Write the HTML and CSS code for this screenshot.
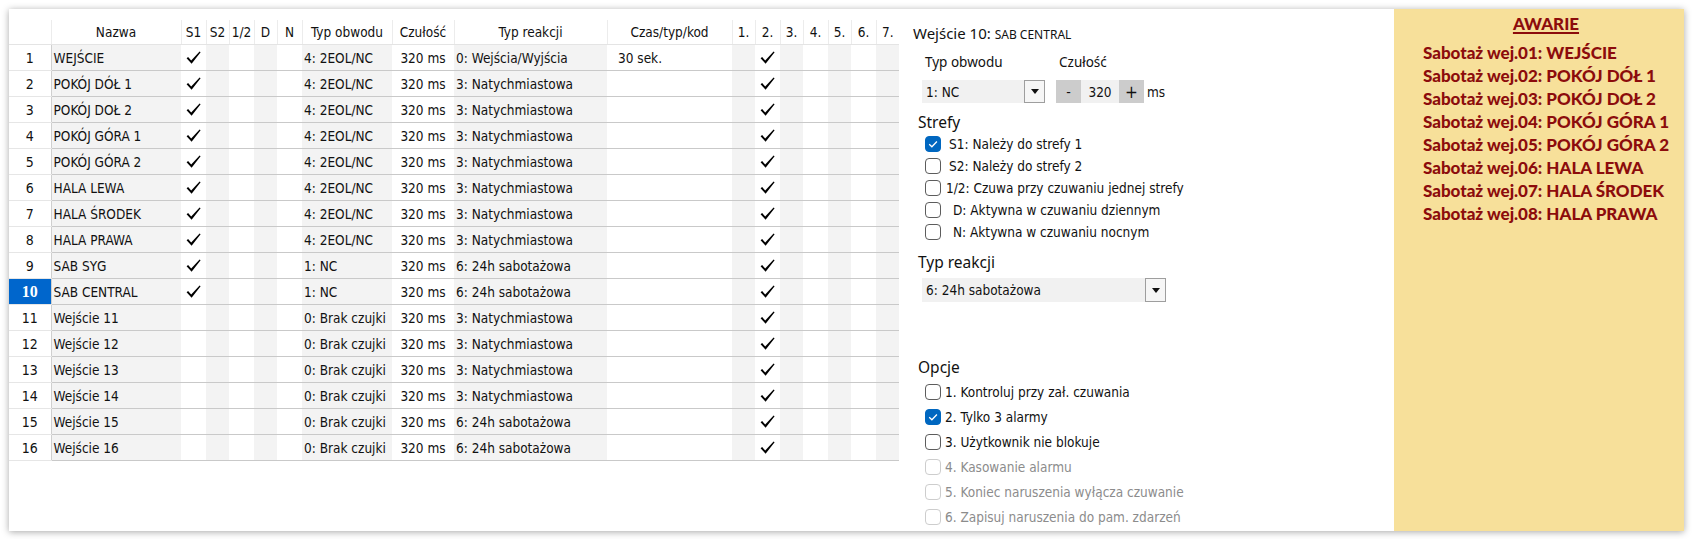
FILE: index.html
```html
<!DOCTYPE html>
<html lang="pl">
<head>
<meta charset="utf-8">
<title>Wejścia</title>
<link rel="stylesheet" href="styles.css">
</head>
<body>
<svg class="defs" width="0" height="0" aria-hidden="true">
  <defs>
    <symbol id="tick" viewBox="0 0 15 13">
      <path d="M0.6 7.2 L2.1 6.1 L5.2 9.4 L13.6 0.4 L14.6 1.3 L5.6 12.8 Z"/>
    </symbol>
  </defs>
</svg>
<div class="panel">
  <section class="grid-area">
    <table class="inputs">
      <colgroup>
        <col class="c-num">
        <col class="c-name g">
        <col class="c-s1">
        <col class="c-s2 g">
        <col class="c-half">
        <col class="c-d g">
        <col class="c-n">
        <col class="c-type g">
        <col class="c-sens">
        <col class="c-react g">
        <col class="c-time">
        <col class="c-o1 g">
        <col class="c-o2">
        <col class="c-o3 g">
        <col class="c-o4">
        <col class="c-o5 g">
        <col class="c-o6">
        <col class="c-o7 g">
      </colgroup>
      <thead>
        <tr>
          <th class="num"></th><th>Nazwa</th><th>S1</th><th>S2</th><th>1/2</th><th>D</th><th>N</th>
          <th>Typ obwodu</th><th>Czułość</th><th>Typ reakcji</th><th>Czas/typ/kod</th>
          <th>1.</th><th>2.</th><th>3.</th><th>4.</th><th>5.</th><th>6.</th><th class="last">7.</th>
        </tr>
      </thead>
      <tbody id="rows"></tbody>
    </table>
  </section>

  <section class="details">
    <h2 class="title">Wejście 10: <span class="title-name">SAB CENTRAL</span></h2>
    <div class="circuit">
      <div class="lbl">Typ obwodu</div>
      <div class="lbl">Czułość</div>
      <div class="combo narrow"><span class="combo-val">1: NC</span><span class="combo-btn"><i class="tri"></i></span></div>
      <div class="stepper">
        <span class="step-btn">-</span><span class="step-val">320</span><span class="step-btn plus">+</span><span class="unit">ms</span>
      </div>
    </div>

    <h3 class="group">Strefy</h3>
    <ul class="checks zones">
      <li><span class="cb on"><svg viewBox="0 0 10 10"><path d="M2.3 5.2 L4.2 7 L7.8 3.2"/></svg></span><span class="cl ind8">S1: Należy do strefy 1</span></li>
      <li><span class="cb"></span><span class="cl ind8">S2: Należy do strefy 2</span></li>
      <li><span class="cb"></span><span class="cl ind5">1/2: Czuwa przy czuwaniu jednej strefy</span></li>
      <li><span class="cb"></span><span class="cl ind12">D: Aktywna w czuwaniu dziennym</span></li>
      <li><span class="cb"></span><span class="cl ind12">N: Aktywna w czuwaniu nocnym</span></li>
    </ul>

    <h3 class="group">Typ reakcji</h3>
    <div class="combo wide"><span class="combo-val">6: 24h sabotażowa</span><span class="combo-btn"><i class="tri"></i></span></div>

    <h3 class="group options-head">Opcje</h3>
    <ul class="checks options">
      <li><span class="cb"></span><span class="cl">1. Kontroluj przy zał. czuwania</span></li>
      <li><span class="cb on"><svg viewBox="0 0 10 10"><path d="M2.3 5.2 L4.2 7 L7.8 3.2"/></svg></span><span class="cl">2. Tylko 3 alarmy</span></li>
      <li><span class="cb"></span><span class="cl">3. Użytkownik nie blokuje</span></li>
      <li class="dis"><span class="cb"></span><span class="cl">4. Kasowanie alarmu</span></li>
      <li class="dis"><span class="cb"></span><span class="cl">5. Koniec naruszenia wyłącza czuwanie</span></li>
      <li class="dis"><span class="cb"></span><span class="cl">6. Zapisuj naruszenia do pam. zdarzeń</span></li>
    </ul>
  </section>

  <aside class="faults">
    <div class="faults-box">
      <div class="faults-title">AWARIE</div>
      <ul class="faults-list">
        <li>Sabotaż wej.01: WEJŚCIE</li>
        <li>Sabotaż wej.02: POKÓJ DÓŁ 1</li>
        <li>Sabotaż wej.03: POKÓJ DOŁ 2</li>
        <li>Sabotaż wej.04: POKÓJ GÓRA 1</li>
        <li>Sabotaż wej.05: POKÓJ GÓRA 2</li>
        <li>Sabotaż wej.06: HALA LEWA</li>
        <li>Sabotaż wej.07: HALA ŚRODEK</li>
        <li>Sabotaż wej.08: HALA PRAWA</li>
      </ul>
    </div>
  </aside>
</div>
<script src="app.js"></script>
</body>
</html>
```

FILE: app.js
```js
// Input list: name, zone S1 flag, circuit type, reaction type, delay text
var inputs = [
  ["WEJŚCIE", true, "4: 2EOL/NC", "0: Wejścia/Wyjścia", "30 sek."],
  ["POKÓJ DÓŁ 1", true, "4: 2EOL/NC", "3: Natychmiastowa", ""],
  ["POKÓJ DOŁ 2", true, "4: 2EOL/NC", "3: Natychmiastowa", ""],
  ["POKÓJ GÓRA 1", true, "4: 2EOL/NC", "3: Natychmiastowa", ""],
  ["POKÓJ GÓRA 2", true, "4: 2EOL/NC", "3: Natychmiastowa", ""],
  ["HALA LEWA", true, "4: 2EOL/NC", "3: Natychmiastowa", ""],
  ["HALA ŚRODEK", true, "4: 2EOL/NC", "3: Natychmiastowa", ""],
  ["HALA PRAWA", true, "4: 2EOL/NC", "3: Natychmiastowa", ""],
  ["SAB SYG", true, "1: NC", "6: 24h sabotażowa", ""],
  ["SAB CENTRAL", true, "1: NC", "6: 24h sabotażowa", ""],
  ["Wejście 11", false, "0: Brak czujki", "3: Natychmiastowa", ""],
  ["Wejście 12", false, "0: Brak czujki", "3: Natychmiastowa", ""],
  ["Wejście 13", false, "0: Brak czujki", "3: Natychmiastowa", ""],
  ["Wejście 14", false, "0: Brak czujki", "3: Natychmiastowa", ""],
  ["Wejście 15", false, "0: Brak czujki", "6: 24h sabotażowa", ""],
  ["Wejście 16", false, "0: Brak czujki", "6: 24h sabotażowa", ""]
];
var selected = 10;
var tick = '<svg class="tick"><use href="#tick"/></svg>';

var html = "";
inputs.forEach(function (r, i) {
  var n = i + 1;
  html += '<tr>' +
    '<td class="num' + (n === selected ? ' sel' : '') + '">' + n + '</td>' +
    '<td class="txt">' + r[0] + '</td>' +
    '<td class="mark">' + (r[1] ? tick : '') + '</td>' +
    '<td></td><td></td><td></td><td></td>' +
    '<td class="txt">' + r[2] + '</td>' +
    '<td class="ctr">320 ms</td>' +
    '<td class="txt">' + r[3] + '</td>' +
    '<td class="txt time">' + r[4] + '</td>' +
    '<td></td><td class="mark">' + tick + '</td><td></td><td></td><td></td><td></td><td></td>' +
    '</tr>';
});
document.getElementById("rows").innerHTML = html;
```

FILE: styles.css
```css
html, body {
  margin: 0;
  background: #fff;
}

.defs {
  position: absolute;
  width: 0;
  height: 0;
}

.panel {
  margin: 9px;
  width: 1675px;
  height: 522px;
  display: flex;
  background: #fff;
  box-shadow: 0 1px 7px rgba(0, 0, 0, 0.35);
  overflow: hidden;
}

/* ---------- input table ---------- */
.grid-area {
  width: 890px;
  flex: none;
  padding-top: 11px;
}

.inputs {
  table-layout: fixed;
  border-collapse: collapse;
  width: 890px;
  font-family: "DejaVu Sans Condensed", "DejaVu Sans", sans-serif;
  font-size: 13.5px;
  color: #111;
}

.c-num { width: 42px; }
.c-name { width: 130px; }
.c-s1 { width: 25px; }
.c-s2 { width: 23px; }
.c-half { width: 25px; }
.c-d { width: 23px; }
.c-n { width: 25px; }
.c-type { width: 90px; }
.c-sens { width: 62px; }
.c-react { width: 153px; }
.c-time { width: 125px; }
.c-o1, .c-o3, .c-o5, .c-o7 { width: 23px; }
.c-o2, .c-o4, .c-o6 { width: 25px; }

col.g { background: #f3f3f3; }

.inputs th {
  background: #fff;
  height: 24px;
  padding: 0;
  font-weight: normal;
  text-align: center;
  white-space: nowrap;
  border-right: 1px solid #ececec;
  border-bottom: 1px solid #e4e4e4;
}
.inputs th.last { border-right: 0; }

.inputs td {
  height: 25px;
  padding: 0;
  white-space: nowrap;
  overflow: hidden;
  border-bottom: 1px solid #c9c9c9;
}

.inputs td.num {
  background: #fff;
  text-align: center;
  font-size: 14px;
  border-bottom-color: #e6e6e6;
  border-right: 1px solid #cfcfcf;
}
.inputs td.num.sel {
  background: #0066cc;
  color: #fff;
  font-weight: bold;
  font-family: "Liberation Serif", serif;
  font-size: 16px;
}

.inputs td.txt { padding-left: 2px; }
.inputs td.time { padding-left: 11px; }
.inputs td.ctr { text-align: center; }
.inputs td.mark { text-align: center; }

.tick {
  width: 15px;
  height: 13px;
  fill: #000;
  vertical-align: -1px;
}

/* ---------- detail form ---------- */
.details {
  flex: 1;
  padding-top: 14px;
  font-family: "Noto Sans", "Open Sans", sans-serif;
  color: #111;
  overflow: hidden;
}

.title {
  margin: 0 0 0 14px;
  font-size: 15px;
  line-height: 20px;
  font-weight: normal;
}
.title-name { font-size: 12px; }

.circuit {
  margin: 8px 0 0 23px;
  display: grid;
  grid-template-columns: 123px auto;
  column-gap: 11px;
  row-gap: 9px;
  align-items: center;
}
.lbl {
  font-size: 13.5px;
  line-height: 18px;
  padding-left: 3px;
}

.combo {
  height: 23px;
  display: flex;
  align-items: stretch;
  background: #f1f1f1;
  font-family: "DejaVu Sans Condensed", "DejaVu Sans", sans-serif;
  font-size: 13.5px;
}
.combo.narrow { width: 123px; }
.combo.wide { width: 244px; height: 24px; margin: 6px 0 0 23px; }
.combo-val {
  flex: 1;
  padding-left: 4px;
  display: flex;
  align-items: center;
}
.combo-btn {
  width: 19px;
  border: 1px solid #9e9e9e;
  background: #f6f6f6;
  display: flex;
  align-items: center;
  justify-content: center;
}
.tri {
  width: 0;
  height: 0;
  border-left: 4.5px solid transparent;
  border-right: 4.5px solid transparent;
  border-top: 5px solid #111;
}

.stepper {
  height: 23px;
  display: flex;
  align-items: stretch;
  font-family: "DejaVu Sans Condensed", "DejaVu Sans", sans-serif;
  font-size: 13.5px;
}
.step-btn {
  width: 25px;
  background: #cccccc;
  display: flex;
  align-items: center;
  justify-content: center;
  font-size: 14px;
}
.step-btn.plus { font-size: 17px; }
.step-val {
  width: 38px;
  background: #f1f1f1;
  display: flex;
  align-items: center;
  justify-content: center;
}
.unit {
  display: flex;
  align-items: center;
  padding-left: 3px;
}

.group {
  margin: 9px 0 0 19px;
  font-size: 15.5px;
  line-height: 20px;
  font-weight: normal;
}
.options-head { margin-top: 55px; }

.checks {
  list-style: none;
  margin: 1px 0 0 26px;
  padding: 0;
  font-family: "DejaVu Sans Condensed", "DejaVu Sans", sans-serif;
  font-size: 13.5px;
}
.checks li {
  display: flex;
  align-items: center;
  height: 22px;
}
.checks.options { margin-top: 2px; }
.checks.options li { height: 25px; }

.cb {
  width: 16px;
  height: 16px;
  flex: none;
  box-sizing: border-box;
  border: 1px solid #5c5c5c;
  border-radius: 4px;
  background: #fff;
  display: flex;
}
.cb.on {
  background: #0067c0;
  border-color: #0067c0;
}
.cb svg {
  width: 14px;
  height: 14px;
  fill: none;
  stroke: #fff;
  stroke-width: 0.9;
}
.cl { margin-left: 4px; }
.cl.ind5 { margin-left: 5px; }
.cl.ind8 { margin-left: 8px; }
.cl.ind12 { margin-left: 12px; }

.checks li.dis .cb { border-color: #cdcdcd; }
.checks li.dis .cl { color: #8c8c8c; }

/* ---------- faults list ---------- */
.faults {
  width: 290px;
  flex: none;
  background: #f7e09a;
  color: #8c0c0c;
  font-family: Lato, "Open Sans", sans-serif;
  font-weight: 900;
  display: flex;
  justify-content: center;
  padding-top: 4px;
  padding-left: 14px;
  box-sizing: border-box;
}
.faults-box { display: flex; flex-direction: column; }
.faults-title {
  text-align: center;
  font-size: 17px;
  line-height: 22px;
  text-decoration: underline;
  text-decoration-thickness: 1.5px;
  text-underline-offset: 2px;
}
.faults-list {
  list-style: none;
  margin: 6px 0 0;
  padding: 0;
  font-size: 17px;
  line-height: 23px;
  white-space: nowrap;
}
```
